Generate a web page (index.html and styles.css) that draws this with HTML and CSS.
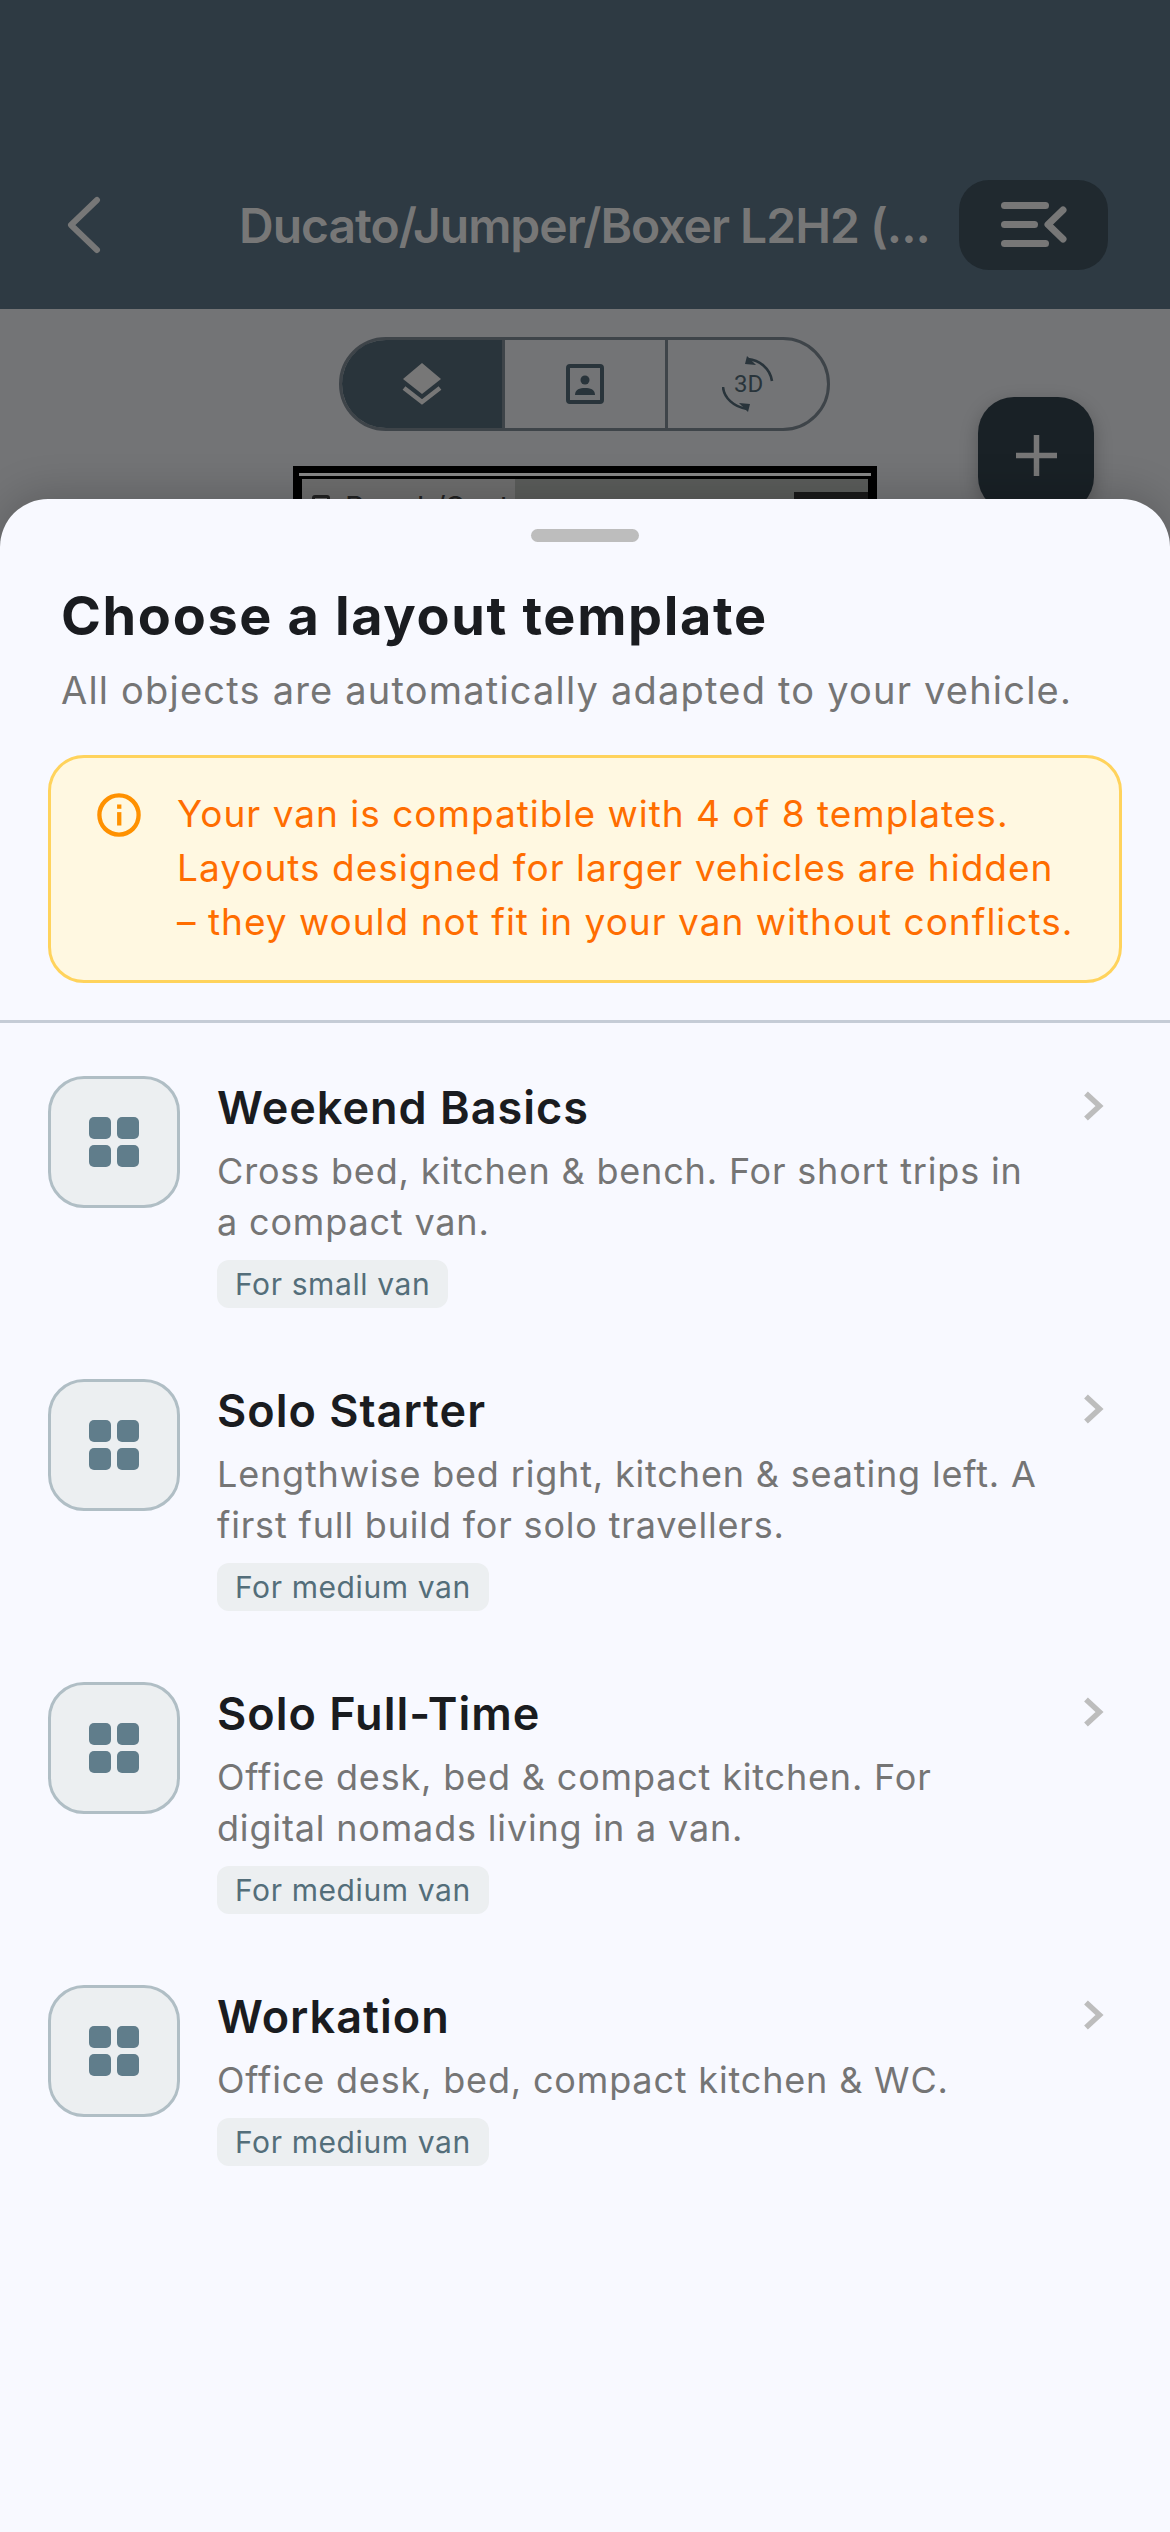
FILE: index.html
```html
<!DOCTYPE html>
<html lang="en">
<head>
    <meta charset="UTF-8">
    <meta name="viewport" content="width=device-width, initial-scale=1.0">
    <title>Choose a layout template</title>
    <link rel="stylesheet" href="styles.css">
</head>
<body>

<div class="app">

    <!-- top bar, dimmed by the sheet -->
    <header class="topbar">
        <svg class="back-icon" width="36" height="58" viewBox="0 0 36 58">
            <path d="M31 4 L5 29 L31 54" fill="none" stroke="#777" stroke-width="6" stroke-linecap="round" stroke-linejoin="round"/>
        </svg>
        <h2 class="topbar-title">Ducato/Jumper/Boxer L2H2 (...</h2>
        <div class="menu-btn">
            <svg width="66" height="46" viewBox="0 0 66 46">
                <rect x="0" y="0" width="48" height="7" rx="3.5" fill="#777"/>
                <rect x="0" y="19" width="37" height="7" rx="3.5" fill="#777"/>
                <rect x="0" y="38" width="48" height="7" rx="3.5" fill="#777"/>
                <path d="M62 8 L47 22.5 L62 37" fill="none" stroke="#777" stroke-width="7" stroke-linecap="round" stroke-linejoin="round"/>
            </svg>
        </div>
    </header>

    <!-- editor behind the sheet -->
    <section class="editor">
        <div class="segments">
            <div class="segment segment-active">
                <svg width="40" height="42" viewBox="0 0 40 42">
                    <path d="M20 0 L39 16 L20 31 L1 16 Z" fill="#777"/>
                    <path d="M2 25 L20 39 L38 25" fill="none" stroke="#777" stroke-width="4.5"/>
                </svg>
            </div>
            <div class="segment">
                <svg width="38" height="40" viewBox="0 0 38 40">
                    <rect x="2" y="2" width="34" height="36" rx="2" fill="none" stroke="#29343b" stroke-width="4"/>
                    <circle cx="19" cy="16" r="4.5" fill="#29343b"/>
                    <path d="M9 31 C9 25 14 24 19 24 C24 24 29 25 29 31 Z" fill="#29343b"/>
                </svg>
            </div>
            <div class="segment">
                <svg class="icon-3d" width="52" height="56" viewBox="0 0 52 56">
                    <path d="M26 3 C37 4 48 12 50 25" fill="none" stroke="#29343b" stroke-width="2.6"/>
                    <path d="M25 0 L34 9 L23 8 Z" fill="#29343b"/>
                    <path d="M1 31 C2 42 12 51 25 53" fill="none" stroke="#29343b" stroke-width="2.6"/>
                    <path d="M26 56 L17 47 L28 48 Z" fill="#29343b"/>
                    <text x="12" y="36" class="label-3d">3D</text>
                </svg>
            </div>
        </div>

        <div class="plan">
            <div class="plan-edge"></div>
            <div class="plan-inner">
                <div class="plan-room">
                    <span class="plan-box"></span>
                    <span class="plan-label">Bench/Seat</span>
                </div>
                <div class="plan-dark"></div>
            </div>
        </div>

        <div class="fab">
            <svg width="41" height="41" viewBox="0 0 41 41">
                <path d="M20.5 0 V41 M0 20.5 H41" stroke="#777" stroke-width="5.5"/>
            </svg>
        </div>
    </section>

    <!-- bottom sheet -->
    <section class="sheet">
        <div class="handle"></div>

        <div class="sheet-head">
            <h1>Choose a layout template</h1>
            <p>All objects are automatically adapted to your vehicle.</p>
        </div>

        <div class="notice">
            <svg class="notice-icon" width="44" height="44" viewBox="0 0 46 46">
                <circle cx="23" cy="23" r="20.5" fill="none" stroke="#ff9100" stroke-width="4.5"/>
                <rect x="21" y="20" width="4.5" height="14" fill="#ff9100"/>
                <rect x="21" y="12" width="4.5" height="4.5" fill="#ff9100"/>
            </svg>
            <p>Your van is compatible with 4 of 8 templates.<br>Layouts designed for larger vehicles are hidden<br>– they would not fit in your van without conflicts.</p>
        </div>

        <div class="divider"></div>

        <ul class="templates">
            <li class="template">
                <div class="template-icon">
                    <div class="tiles"><i></i><i></i><i></i><i></i></div>
                </div>
                <div class="template-body">
                    <h3>Weekend Basics</h3>
                    <p>Cross bed, kitchen &amp; bench. For short trips in<br>a compact van.</p>
                    <span class="tag">For small van</span>
                </div>
                <svg class="chevron" width="20" height="30" viewBox="0 0 20 30"><path d="M2 2.5 L15.5 15 L2 27.5" fill="none" stroke="#bdbdbd" stroke-width="5.5"/></svg>
            </li>
            <li class="template">
                <div class="template-icon">
                    <div class="tiles"><i></i><i></i><i></i><i></i></div>
                </div>
                <div class="template-body">
                    <h3>Solo Starter</h3>
                    <p>Lengthwise bed right, kitchen &amp; seating left. A<br>first full build for solo travellers.</p>
                    <span class="tag">For medium van</span>
                </div>
                <svg class="chevron" width="20" height="30" viewBox="0 0 20 30"><path d="M2 2.5 L15.5 15 L2 27.5" fill="none" stroke="#bdbdbd" stroke-width="5.5"/></svg>
            </li>
            <li class="template">
                <div class="template-icon">
                    <div class="tiles"><i></i><i></i><i></i><i></i></div>
                </div>
                <div class="template-body">
                    <h3>Solo Full-Time</h3>
                    <p>Office desk, bed &amp; compact kitchen. For<br>digital nomads living in a van.</p>
                    <span class="tag">For medium van</span>
                </div>
                <svg class="chevron" width="20" height="30" viewBox="0 0 20 30"><path d="M2 2.5 L15.5 15 L2 27.5" fill="none" stroke="#bdbdbd" stroke-width="5.5"/></svg>
            </li>
            <li class="template">
                <div class="template-icon">
                    <div class="tiles"><i></i><i></i><i></i><i></i></div>
                </div>
                <div class="template-body">
                    <h3>Workation</h3>
                    <p>Office desk, bed, compact kitchen &amp; WC.</p>
                    <span class="tag">For medium van</span>
                </div>
                <svg class="chevron" width="20" height="30" viewBox="0 0 20 30"><path d="M2 2.5 L15.5 15 L2 27.5" fill="none" stroke="#bdbdbd" stroke-width="5.5"/></svg>
            </li>
        </ul>
    </section>
</div>

</body>
</html>
```

FILE: styles.css
```css
* {
    box-sizing: border-box;
}

body {
    margin: 0;
    font-family: Inter, "Noto Sans", sans-serif;
    background: #737476;
}

.app {
    position: relative;
    width: 1170px;
    height: 2532px;
    overflow: hidden;
    background: #737476;
}

/* top bar */
.topbar {
    height: 309px;
    padding: 180px 62px 39px 66px;
    background: #2e3a43;
    display: flex;
    align-items: center;
}

.back-icon {
    flex-shrink: 0;
    margin-right: 137px;
}

.topbar-title {
    margin: 0;
    flex: 1;
    font-size: 48px;
    font-weight: 600;
    letter-spacing: -1px;
    color: #777;
    white-space: nowrap;
}

.menu-btn {
    width: 149px;
    height: 90px;
    border-radius: 30px;
    background: #20292f;
    display: flex;
    align-items: center;
    justify-content: center;
}

/* editor */
.editor {
    position: relative;
    height: 300px;
    padding-top: 28px;
}

.segments {
    width: 491px;
    height: 94px;
    margin-left: 339px;
    border: 3px solid #3e4449;
    border-radius: 47px;
    overflow: hidden;
    display: flex;
}

.segment {
    width: 163px;
    display: flex;
    align-items: center;
    justify-content: center;
    border-right: 3px solid #3e4449;
}

.segment:last-child {
    flex: 1;
    border-right: none;
}

.segment-active {
    background: #29343b;
}

.label-3d {
    font-family: Roboto, sans-serif;
    font-size: 24px;
    fill: #29343b;
}

.plan {
    width: 584px;
    height: 80px;
    margin: 35px 0 0 293px;
    border: 7px solid #000;
    border-width: 7px 6px 6px;
    background: #000;
}

.plan-edge {
    height: 3px;
    background: #888;
}

.plan-inner {
    height: 80px;
    border: 3px solid #000;
    background: #5b5d5b;
    display: flex;
    justify-content: space-between;
}

.plan-room {
    width: 213px;
    padding: 13px 0 0 10px;
    background: #6e6e6e;
    display: flex;
    align-items: flex-start;
    gap: 15px;
    white-space: nowrap;
}

.plan-box {
    width: 18px;
    height: 20px;
    margin-top: 3px;
    border: 3px solid #222;
    border-radius: 3px;
    flex-shrink: 0;
}

.plan-label {
    font-size: 30px;
    line-height: 30px;
    color: #222;
}

.plan-dark {
    width: 74px;
    margin-top: 13px;
    background: #1a1a1a;
}

.fab {
    position: absolute;
    top: 88px;
    left: 978px;
    width: 116px;
    height: 116px;
    border-radius: 36px;
    background: #192126;
    box-shadow: 0 6px 18px rgba(0, 0, 0, 0.25);
    display: flex;
    align-items: center;
    justify-content: center;
}

/* bottom sheet */
.sheet {
    position: absolute;
    top: 499px;
    left: 0;
    right: 0;
    bottom: 0;
    background: #f8f9ff;
    border-radius: 48px 48px 0 0;
    box-shadow: 0 -6px 40px rgba(0, 0, 0, 0.18);
}

.handle {
    width: 108px;
    height: 13px;
    margin: 30px auto 0;
    border-radius: 7px;
    background: #bdbdbd;
}

.sheet-head {
    padding: 39px 61px 0;
}

h1 {
    margin: 0;
    font-size: 54px;
    line-height: 70px;
    font-weight: 700;
    letter-spacing: 1.65px;
    color: #1a1c20;
}

.sheet-head p {
    margin: 13px 0 0;
    font-size: 38px;
    line-height: 52px;
    letter-spacing: 1.2px;
    color: #757575;
}

.notice {
    height: 228px;
    margin: 39px 48px 0;
    padding: 29px 30px 0 46px;
    border: 3px solid #ffd35c;
    border-radius: 36px;
    background: #fff8e1;
    display: flex;
    gap: 36px;
}

.notice-icon {
    flex-shrink: 0;
    margin-top: 6px;
}

.notice p {
    margin: 0;
    font-size: 37px;
    line-height: 54px;
    letter-spacing: 1px;
    white-space: nowrap;
    color: #ff6d00;
}

.divider {
    height: 3px;
    margin-top: 37px;
    background: #c5ccd6;
}

.templates {
    list-style: none;
    margin: 0;
    padding: 53px 48px 0;
}

.template {
    display: flex;
    align-items: flex-start;
    padding-bottom: 71px;
}

.template-icon {
    width: 132px;
    height: 132px;
    flex-shrink: 0;
    margin-right: 37px;
    border: 3px solid #b0bec5;
    border-radius: 36px;
    background: #eceff1;
    display: flex;
    align-items: center;
    justify-content: center;
}

.tiles {
    display: grid;
    grid-template-columns: 22px 22px;
    grid-template-rows: 22px 22px;
    gap: 6px;
}

.tiles i {
    border-radius: 5px;
    background: #607d8b;
}

.template-body {
    flex: 1;
    padding-top: 1px;
}

.template-body h3 {
    margin: 0;
    font-size: 45px;
    line-height: 62px;
    font-weight: 600;
    letter-spacing: 1px;
    color: #1a1c20;
}

.template-body p {
    margin: 7px 0 0;
    font-size: 36px;
    line-height: 51px;
    letter-spacing: 0.83px;
    color: #757575;
}

.tag {
    display: inline-block;
    height: 48px;
    margin-top: 12px;
    padding: 0 18px;
    border-radius: 12px;
    background: #eceff1;
    font-size: 30px;
    line-height: 48px;
    letter-spacing: 0.6px;
    color: #546e7a;
}

.chevron {
    flex-shrink: 0;
    margin: 15px 18px 0 0;
}
```
